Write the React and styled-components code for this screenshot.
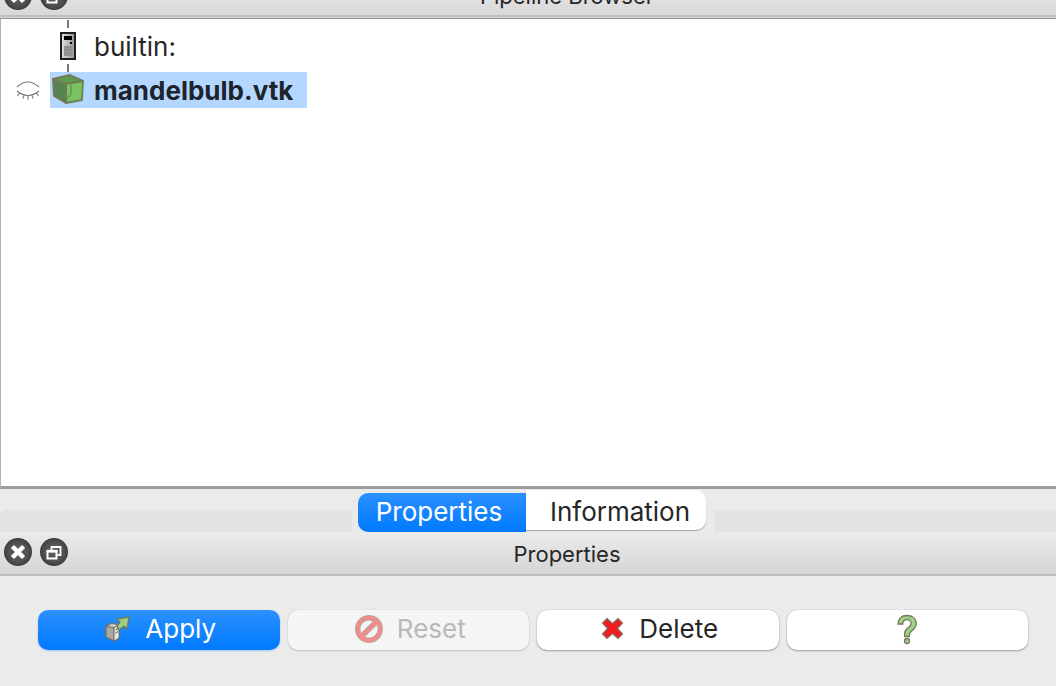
import React, { useState } from "react";
import styled, { createGlobalStyle, css } from "styled-components";

const GlobalStyle = createGlobalStyle`
  *, *::before, *::after { box-sizing: border-box; }
  body {
    margin: 0;
    background: #ebebeb;
    color: #262626;
    font-family: Inter, "Liberation Sans", sans-serif;
  }
  button { font: inherit; }
  svg { display: block; flex: none; }
`;

const Page = styled.main`
  display: flex;
  flex-direction: column;
  min-height: 100vh;
  overflow: hidden;
`;

const TitleBar = styled.header`
  display: flex;
  align-items: ${(p) => (p.$clipped ? "flex-end" : "center")};
  height: ${(p) => (p.$clipped ? 19 : 44)}px;
  padding: 0 0 ${(p) => (p.$clipped ? 8 : 2)}px 4px;
  overflow: hidden;
  border-bottom: ${(p) => (p.$clipped ? "1px solid #8f8f8f" : "2px solid #bcbcbc")};
  background: ${(p) =>
    p.$clipped
      ? "linear-gradient(#e0e0e0 0, #d8d8d8 15px, #bebebe 15px, #bebebe 17px, #dcdcdc 17px)"
      : "linear-gradient(#ebebeb, #d5d5d5)"};
`;

const WindowControls = styled.div`
  display: flex;
  gap: 8px;
  width: 74px;
`;

const RoundButton = styled.button`
  width: 28px;
  height: 28px;
  padding: 0;
  border: 0;
  border-radius: 50%;
  background: radial-gradient(circle, #606060 0, #505050 50%, #3c3c3c 72%);
`;

const Title = styled.h2`
  flex: 1;
  margin: 0;
  padding-top: ${(p) => (p.$clipped ? 0 : 4)}px;
  text-align: center;
  font-size: 22px;
  line-height: 28px;
  font-weight: 400;
`;

const Tree = styled.ul`
  flex: 1;
  margin: 0;
  padding: 1px 0 0;
  list-style: none;
  background: #fff;
  border-left: 1px solid #b4b4b4;
  border-bottom: 3px solid #9c9c9c;
`;

const TreeRow = styled.li`
  display: grid;
  grid-template-columns: 49px auto;
  grid-template-rows: 8px 36px;
  justify-content: start;
  align-items: center;
`;

const Connector = styled.span`
  grid-column: 2;
  width: 2px;
  height: 8px;
  margin-left: 17px;
  background: #787878;
`;

const VisibilityButton = styled.button`
  grid-column: 1;
  grid-row: 2;
  width: 24px;
  height: 24px;
  margin-left: 15px;
  padding: 0;
  border: 0;
  background: none;
`;

const TreeLabel = styled.span`
  grid-column: 2;
  grid-row: 2;
  display: flex;
  align-items: center;
  gap: 10px;
  height: 36px;
  padding: 0 14px 0 2px;
  font-size: 26px;
  line-height: 36px;
  ${(p) =>
    p.$selected &&
    css`
      background: #b3d7ff;
      color: #1d242c;
      font-weight: 700;
    `}
`;

const TreeText = styled.span`
  padding-top: 2px;
`;

const TabRow = styled.div`
  display: grid;
  grid-template-columns: 1fr auto 1fr;
  align-items: end;
  height: 43px;
  margin-right: -10px;
`;

const TabBand = styled.span`
  height: 22px;
  background: #e3e3e3;
  border-top-left-radius: ${(p) => (p.$rounded ? 6 : 0)}px;
`;

const Tabs = styled.div`
  display: flex;
  align-items: flex-end;
  padding: 0 8px 0 6px;
`;

const Tab = styled.button`
  height: ${(p) => (p.$active ? 39 : 40)}px;
  width: ${(p) => (p.$active ? 168 : 180)}px;
  margin: 0 0 ${(p) => (p.$active ? 0 : 2)}px;
  padding: ${(p) => (p.$active ? "0 6px 2px 0" : "4px 0 0 8px")};
  border: 0;
  font-size: 26px;
  line-height: 36px;
  color: ${(p) => (p.$active ? "#fff" : "#262626")};
  background: ${(p) => (p.$active ? "linear-gradient(#2b90ff, #007aff)" : "#fff")};
  border-radius: ${(p) => (p.$active ? "10px 0 0 10px" : "0 10px 10px 0")};
  box-shadow: ${(p) => (p.$active ? "none" : "0 1px 1px rgba(0, 0, 0, 0.3)")};
`;

const Actions = styled.div`
  display: grid;
  grid-template-columns: repeat(4, 1fr);
  gap: 8px;
  padding: 34px 28px 36px 38px;
`;

const ActionButton = styled.button`
  display: flex;
  align-items: center;
  justify-content: center;
  gap: 14px;
  height: 40px;
  padding: 0 0 2px ${(p) => (p.$iconOnly ? 0 : 4)}px;
  border: 0;
  border-radius: 10px;
  font-size: 26px;
  line-height: 38px;
  color: #262626;
  background: #fff;
  box-shadow: 0 0 1px rgba(0, 0, 0, 0.3), 0 1px 2px rgba(0, 0, 0, 0.3);
  ${(p) =>
    p.$primary &&
    css`
      color: #fff;
      background: linear-gradient(#2b90ff, #007aff);
      box-shadow: 0 1px 2px rgba(0, 122, 255, 0.3);
    `}
  &:disabled {
    color: #b9b9b9;
    background: #f5f5f5;
    box-shadow: 0 0 1px rgba(0, 0, 0, 0.2), 0 1px 2px rgba(0, 0, 0, 0.15);
  }
`;

const CloseIcon = () => (
  <svg width="28" height="28" viewBox="0 0 28 28" aria-hidden="true">
    <path d="M10 10l8 8M18 10l-8 8" stroke="#fff" strokeWidth="4.4" strokeLinecap="square" />
  </svg>
);

const FloatIcon = () => (
  <svg width="28" height="28" viewBox="0 0 28 28" fill="none" stroke="#fff" aria-hidden="true">
    <path d="M11.5 12V9h9v8h-3" strokeWidth="1.8" />
    <path d="M7.5 13.5h9v7h-9z" strokeWidth="2" />
    <path d="M6.5 13h11" strokeWidth="2.4" />
  </svg>
);

const ServerIcon = () => (
  <svg width="32" height="32" viewBox="0 0 32 32" aria-hidden="true">
    <defs>
      <linearGradient id="case" x1="0" x2="1">
        <stop offset="0" stopColor="#e2e2e2" />
        <stop offset="1" stopColor="#929292" />
      </linearGradient>
    </defs>
    <path d="M9 3h14v26H9z" fill="url(#case)" stroke="#1f1f1f" strokeWidth="2" />
    <path d="M12 6h8v4h-8zM18 12h2v2h-2z" fill="#000" />
    <path d="M12 16h8v10h-8z" fill="#8f8f8f" />
    <path d="M12 18.5h8M12 21.5h8M12 24.5h8" stroke="#999" />
  </svg>
);

const CubeIcon = () => (
  <svg width="32" height="32" viewBox="0 0 32 32" strokeLinejoin="round" aria-hidden="true">
    <path d="M1 5l17-4 13 5-1 20-16 3L2 22z" fill="#5d9150" />
    <path d="M1 5l17-4 13 6-17 3z" fill="#5f9a50" stroke="#7a7659" strokeWidth="1.800" />
    <path d="M14 10l17-3-1 19-16 3z" fill="#79c262" stroke="#6e7f52" strokeWidth="1.800" />
    <path d="M1 5l13 5v19L2 22z" fill="#568350" stroke="#75785a" strokeWidth="1.800" />
    <path d="M19 11v9l-4 5" fill="none" stroke="#64a353" strokeWidth="2" />
  </svg>
);

const ClosedEyeIcon = () => (
  <svg width="24" height="24" viewBox="0 0 24 24" fill="none" stroke="#777" strokeWidth="1.1" aria-hidden="true">
    <path d="M1 9Q11.500-1 23 9" />
    <path d="M1 13Q12 22 23 13M3.500 15l-2 3M8 17l-1 3.500M12 17.500v4M16 17l1 3.500M20.500 15l2 3" />
  </svg>
);

const ApplyIcon = () => (
  <svg width="26" height="26" viewBox="0 0 26 26" strokeLinejoin="round" aria-hidden="true">
    <path d="M1 10l6-3 7 2v13l-5 3-8-4z" fill="#c8c4bd" stroke="#6e6a66" strokeWidth="1.2" />
    <path d="M1 10l8 2v13l-8-4z" fill="#a9a89f" stroke="#6e6a66" strokeWidth="1" />
    <path d="M9 12l5-3v13l-5 3z" fill="#e8e5e5" stroke="#77716e" strokeWidth="1" />
    <path d="M10.500 14l2.500-1.500M10.500 17l2.500-1.500" stroke="#555" />
    <path d="M12 3l12-2-2 12-3-3-5 4-2-4 3-4z" fill="#9fcf86" stroke="#6d7d58" strokeWidth="1.4" />
  </svg>
);

const ResetIcon = () => (
  <svg width="28" height="28" viewBox="0 0 28 28" fill="none" aria-hidden="true">
    <circle cx="14" cy="14" r="11.300" stroke="#b5ad9e" strokeWidth="5.400" />
    <path d="M6.500 21.500l15-15" stroke="#b5ad9e" strokeWidth="5.600" />
    <circle cx="14" cy="14" r="11.300" stroke="#f48a8a" strokeWidth="3.400" />
    <path d="M6.500 21.500l15-15" stroke="#f48a8a" strokeWidth="3.600" />
  </svg>
);

const DeleteIcon = () => (
  <svg width="24" height="24" viewBox="0 0 24 24" aria-hidden="true">
    <path
      d="M6 1.500l5.500 5 5.500-5 4.500 4.500-5 5.500 5 5.500-4.500 4.500-5.500-5-5.500 5L1.500 17l5-5.500-5-5.500z"
      fill="#ef1c22"
      stroke="#86715d"
      strokeWidth="1.200"
    />
  </svg>
);

const HelpIcon = () => (
  <svg width="28" height="32" viewBox="0 0 28 32" aria-hidden="true">
    <path
      d="M5 11C5 5.500 8.500 2.500 14 2.500c5.500 0 9.300 3 9.300 8 0 6.500-7 7-7 11v2h-4.600V20c0-5.500 6.500-5.500 6.500-9.500 0-2.400-1.500-3.800-4.200-3.800-2.800 0-4.200 1.600-4.200 4.300z"
      fill="#9fd284"
      stroke="#77785e"
      strokeWidth="1.300"
    />
    <circle cx="14" cy="28" r="2.500" fill="#9fd284" stroke="#77785e" strokeWidth="1.300" />
  </svg>
);

function PanelTitle({ title, clipped }) {
  return (
    <TitleBar $clipped={clipped}>
      <WindowControls>
        <RoundButton type="button" aria-label={`Close ${title}`}>
          <CloseIcon />
        </RoundButton>
        <RoundButton type="button" aria-label={`Float ${title}`}>
          <FloatIcon />
        </RoundButton>
      </WindowControls>
      <Title $clipped={clipped}>{title}</Title>
    </TitleBar>
  );
}

export default function App() {
  const [visible, setVisible] = useState(false);

  return (
    <>
      <GlobalStyle />
      <Page>
        <PanelTitle title="Pipeline Browser" clipped />
        <Tree>
          <TreeRow>
            <Connector />
            <TreeLabel>
              <ServerIcon />
              <TreeText>builtin:</TreeText>
            </TreeLabel>
          </TreeRow>
          <TreeRow>
            <Connector />
            <VisibilityButton
              type="button"
              aria-label="Show mandelbulb.vtk"
              aria-pressed={visible}
              onClick={() => setVisible(!visible)}
            >
              <ClosedEyeIcon />
            </VisibilityButton>
            <TreeLabel $selected>
              <CubeIcon />
              <TreeText>mandelbulb.vtk</TreeText>
            </TreeLabel>
          </TreeRow>
        </Tree>
        <TabRow>
          <TabBand $rounded />
          <Tabs role="tablist">
            <Tab type="button" role="tab" aria-selected="true" $active>
              Properties
            </Tab>
            <Tab type="button" role="tab" aria-selected="false">
              Information
            </Tab>
          </Tabs>
          <TabBand />
        </TabRow>
        <PanelTitle title="Properties" />
        <Actions>
          <ActionButton type="button" $primary>
            <ApplyIcon />
            Apply
          </ActionButton>
          <ActionButton type="button" disabled>
            <ResetIcon />
            Reset
          </ActionButton>
          <ActionButton type="button">
            <DeleteIcon />
            Delete
          </ActionButton>
          <ActionButton type="button" aria-label="Help" $iconOnly>
            <HelpIcon />
          </ActionButton>
        </Actions>
      </Page>
    </>
  );
}
